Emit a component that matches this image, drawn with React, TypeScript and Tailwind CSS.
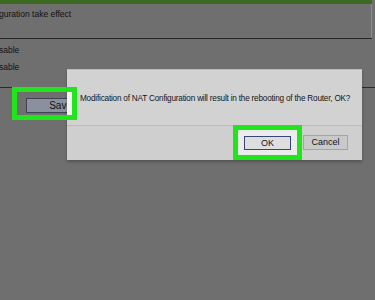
export default function App() {
  return (
    <div
      className="relative w-[375px] h-[300px] overflow-hidden bg-[#6f6f6f] text-[#111]"
      style={{ fontFamily: '"Liberation Sans", Arial, sans-serif' }}
    >
      {/* page behind the modal */}
      <div className="h-[4px] w-[372px] bg-[#3d6920]" />
      <div className="w-[372px] border-r border-[#8c8c8c] h-[34px] pt-[5px]">
        <p className="text-[8.5px] leading-[10px] -ml-[1px]">guration take effect</p>
      </div>
      <div className="w-[372px] h-[1px] bg-[#262626]" />
      <div className="flex flex-col gap-[7px] pt-[6px] text-[8.5px] leading-[10px]">
        <p className="-ml-[1px]">sable</p>
        <p className="-ml-[1px]">sable</p>
      </div>
      <div className="mt-[15px] h-[1px] w-full bg-[#2a2a2a]" />
      <div className="pl-[26px] pt-[4px]">
        <button className="w-[60px] h-[15px] bg-[#8a909d] border border-[#3c4352] text-[10px] leading-[13px] text-right pr-[13px]">
          Save
        </button>
      </div>

      {/* modal */}
      <div className="absolute left-[67px] top-[69px] w-[295px] h-[91px] bg-[#d2d2d2] border-t border-[#bdbdbd] shadow-[0_2px_3px_rgba(0,0,0,0.25)] flex flex-col">
        <div className="h-[55px] flex items-center pl-[13px] pt-[3px]">
          <p className="whitespace-nowrap text-[8.2px] leading-[10px] tracking-[-0.2px] text-[#151515]">
            Modification of NAT Configuration will result in the rebooting of the Router, OK?
          </p>
        </div>
        <div className="h-[1px] bg-[#bcbcbc]" />
        <div className="flex-1 bg-[#cfcfcf] flex items-start justify-end pt-[9px] pr-[14px] gap-[10px]">
          <div className="w-[47px] h-[14px]" />
          <button className="w-[45px] h-[15px] bg-[#c9c9c9] border border-[#a5a5a5] text-[9px] leading-[13px]">
            Cancel
          </button>
        </div>
      </div>

      {/* highlight: Save */}
      <div className="absolute left-[12px] top-[87px] w-[65px] h-[33px] border-[5px] border-[#20e41c] flex justify-end">
        <div className="w-[5px] h-full bg-[#f2f2f2]" />
      </div>

      {/* highlight: OK */}
      <div className="absolute left-[233px] top-[125px] w-[69px] h-[35px] border-[5px] border-[#20e41c] bg-[#ececec] flex items-center justify-center">
        <button className="w-[47px] h-[14px] bg-[#dedede] border border-[#34457a] text-[9px] leading-[12px] text-center">
          OK
        </button>
      </div>
    </div>
  )
}
